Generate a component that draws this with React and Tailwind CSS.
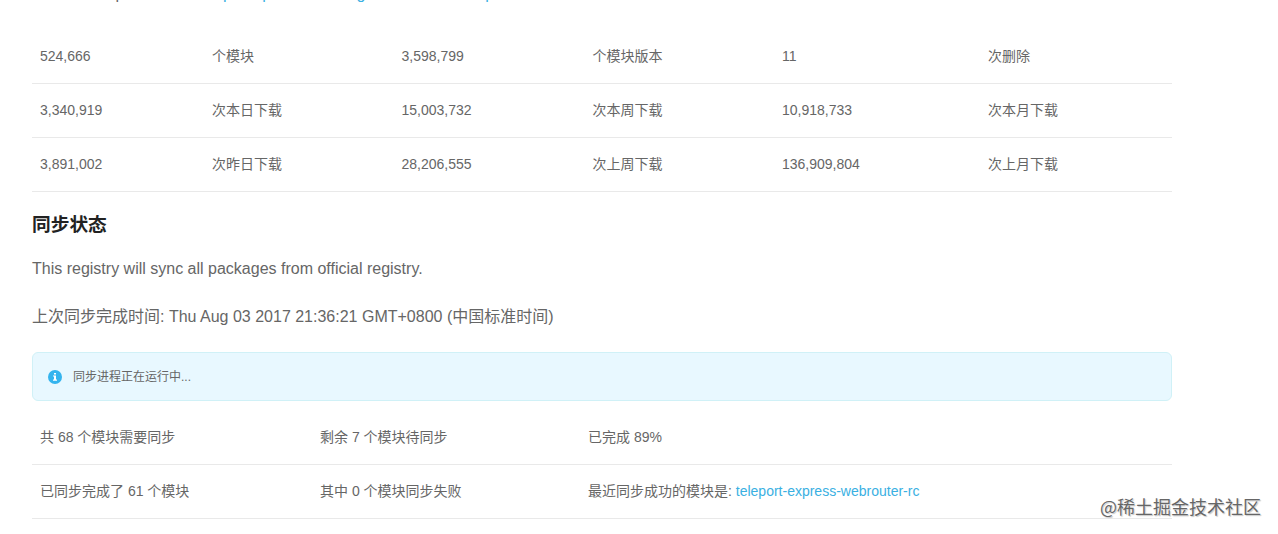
import React from 'react';

const TOTALS = [
  ['524,666', '个模块', '3,598,799', '个模块版本', '11', '次删除'],
  ['3,340,919', '次本日下载', '15,003,732', '次本周下载', '10,918,733', '次本月下载'],
  ['3,891,002', '次昨日下载', '28,206,555', '次上周下载', '136,909,804', '次上月下载'],
];

function InfoIcon() {
  return (
    <svg className="w-3.5 h-3.5 shrink-0" viewBox="0 0 14 14" fill="none">
      <circle cx="7" cy="7" r="7" fill="#34b4ee" />
      <path fill="#fff" d="M6 3h2v1.5H6zM5 5.5h3v4h1v1.2H5V9.5h1v-3H5z" />
    </svg>
  );
}

export default function App() {
  return (
    <div className="relative w-[1278px] h-[534px] overflow-hidden bg-white pl-8 text-[#666] font-['Liberation_Sans','Noto_Sans_CJK_SC',sans-serif]">
      {/* Tail of the mirror list */}
      <div className="flex h-[30px] items-start overflow-hidden pl-[22px]">
        <p className="-mt-[18px] text-base leading-6 whitespace-nowrap">
          node-inspector <span className="inline-block -translate-y-0.5">镜像</span>:{' '}
          <a className="text-[#3ab0e2]">https://npm.taobao.org/mirrors/node-inspector</a>
        </p>
      </div>

      {/* Registry totals */}
      <div className="w-[1140px] text-sm">
        {TOTALS.map((row) => (
          <div
            key={row[0]}
            className="grid h-[54px] grid-cols-[172px_189.5px_191px_189.5px_206px_192px] items-center border-b border-[#e9e9e9] pb-0.5"
          >
            {row.map((cell) => (
              <span key={cell} className="pl-2">{cell}</span>
            ))}
          </div>
        ))}
      </div>

      <h3 className="mt-[18px] text-[18.72px] leading-[30px] font-bold text-[#222]">同步状态</h3>
      <p className="mt-[17px] text-base leading-6">This registry will sync all packages from official registry.</p>
      <p className="mt-6 text-base leading-6">上次同步完成时间: Thu Aug 03 2017 21:36:21 GMT+0800 (中国标准时间)</p>

      <div className="mt-[23px] flex h-[49px] w-[1140px] items-center gap-3 rounded-md border border-[#d0f1f7] bg-[#e8f8ff] pl-[14.5px] text-xs">
        <InfoIcon />
        <span className="-ml-[0.5px]">同步进程正在运行中...</span>
      </div>

      {/* Sync progress */}
      <div className="mt-[10px] w-[1140px] text-sm">
        <div className="grid h-[54px] grid-cols-[280px_268px_592px] items-center border-b border-[#e9e9e9] pb-0.5">
          <span className="pl-2">共 68 个模块需要同步</span>
          <span className="pl-2">剩余 7 个模块待同步</span>
          <span className="pl-2">已完成 89%</span>
        </div>
        <div className="grid h-[54px] grid-cols-[280px_268px_592px] items-center border-b border-[#e9e9e9] pb-0.5">
          <span className="pl-2">已同步完成了 61 个模块</span>
          <span className="pl-2">其中 0 个模块同步失败</span>
          <span className="pl-2">
            最近同步成功的模块是: <a className="text-[#3ab0e2]">teleport-express-webrouter-rc</a>
          </span>
        </div>
      </div>

      <span className="absolute right-[17px] bottom-[14px] text-[18px] leading-7 text-[#666] font-['Noto_Sans_CJK_SC',sans-serif] [text-shadow:0_0_2px_#fff,1px_1px_1px_#bbb,-1px_-1px_1px_#fff]">
        @稀土掘金技术社区
      </span>
    </div>
  );
}
